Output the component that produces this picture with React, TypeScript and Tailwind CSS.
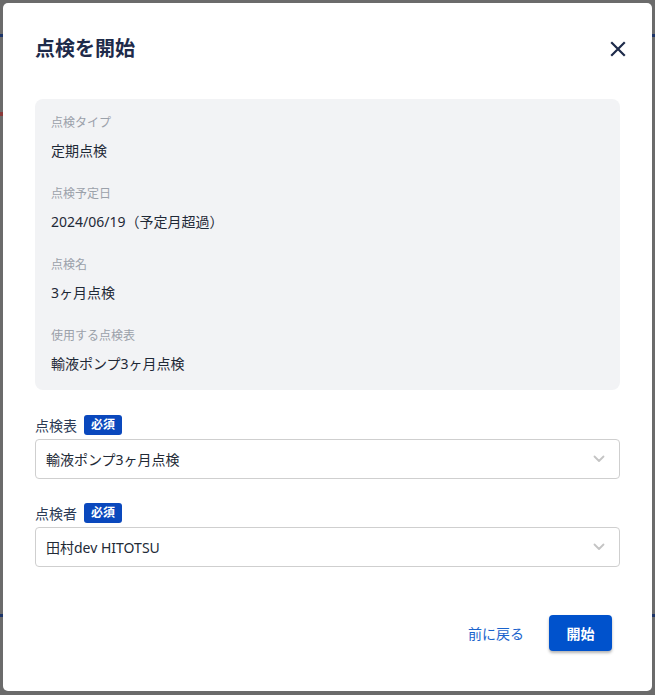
import React from "react";

const infoRows = [
  { label: "点検タイプ", value: "定期点検" },
  { label: "点検予定日", value: "2024/06/19（予定月超過）" },
  { label: "点検名", value: "3ヶ月点検" },
  { label: "使用する点検表", value: "輸液ポンプ3ヶ月点検" },
];

function Chevron() {
  return (
    <svg width="12" height="8" viewBox="0 0 12 8" fill="none">
      <path d="M1.5 1.5 6 6l4.5-4.5" stroke="#c4c4c4" strokeWidth="1.8" strokeLinecap="round" strokeLinejoin="round" />
    </svg>
  );
}

function SelectField({ label, value }: { label: string; value: string }) {
  return (
    <div>
      <div className="flex h-5 items-center gap-[7px]">
        <span className="text-[14px] text-[#2b3a55]">{label}</span>
        <span className="flex h-5 items-center rounded-[3px] bg-[#0a48bd] px-[7px] text-[12px] font-bold text-white">
          必須
        </span>
      </div>
      <div className="mt-1 flex h-10 items-center justify-between rounded-[4px] border border-[#cfcfcf] bg-white pl-[10px] pr-[14px]">
        <span className="text-[14px] text-[#222a36]">{value}</span>
        <Chevron />
      </div>
    </div>
  );
}

export default function App() {
  return (
    <div
      className="relative min-h-[695px] bg-[#6b6b6b] p-[3px]"
      style={{ fontFamily: '"Noto Sans", "Noto Sans CJK JP", sans-serif' }}
    >
      {/* page behind the overlay */}
      <span className="absolute left-0 top-[34px] h-[3px] w-[3px] bg-[#1d3569]" />
      <span className="absolute left-0 top-[112px] h-[4px] w-[3px] bg-[#8a3a3a]" />
      <span className="absolute left-0 top-[614px] h-[3px] w-[3px] bg-[#1d3569]" />
      <span className="absolute right-0 top-[34px] h-[3px] w-[3px] bg-[#1d3569]" />
      <span className="absolute right-0 top-[614px] h-[3px] w-[3px] bg-[#1d3569]" />

      <div className="relative h-[688px] rounded-[5px] bg-white px-8 pt-8">
        <div className="flex items-center justify-between">
          <h1 className="text-[20px] font-bold leading-7 text-[#1e2b4a]">点検を開始</h1>
          <svg width="16" height="16" viewBox="0 0 16 16" className="mr-[-6px]">
            <path d="M2 2l12 12M14 2 2 14" stroke="#1e2b4a" strokeWidth="2.2" strokeLinecap="square" />
          </svg>
        </div>

        <div className="mt-9 flex flex-col gap-6 rounded-lg bg-[#f2f3f5] px-4 pb-4 pt-[15px]">
          {infoRows.map((r) => (
            <div key={r.label}>
              <div className="text-[12px] leading-[18px] text-[#9ba1aa]">{r.label}</div>
              <div className="mt-[9px] text-[14px] leading-5 text-[#1f2937]">{r.value}</div>
            </div>
          ))}
        </div>

        <div className="mt-[25px] flex flex-col gap-[24px]">
          <SelectField label="点検表" value="輸液ポンプ3ヶ月点検" />
          <SelectField label="点検者" value="田村dev HITOTSU" />
        </div>

        <div className="mt-12 flex items-center justify-end gap-[25px] pr-2">
          <span className="text-[14px] text-[#1a63cc]">前に戻る</span>
          <button className="h-9 w-[63px] rounded-[4px] bg-[#0052cc] text-[14px] font-bold text-white shadow-[0_2px_3px_rgba(0,0,0,0.3)]">
            開始
          </button>
        </div>
      </div>
    </div>
  );
}
